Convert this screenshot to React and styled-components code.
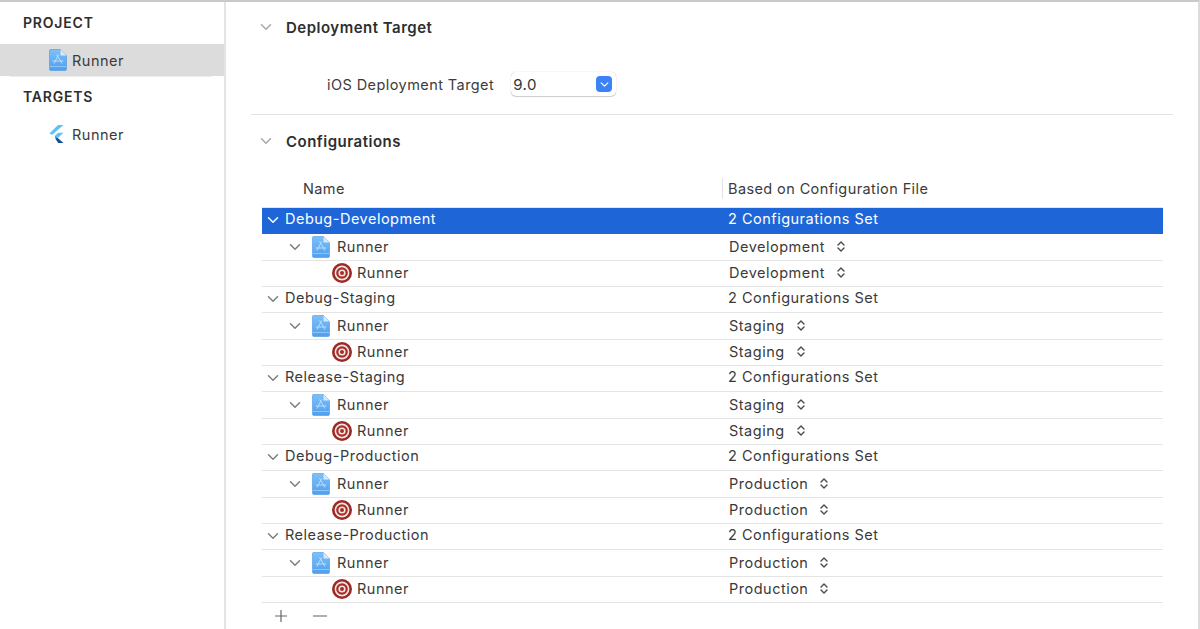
import React from "react";
import styled, { createGlobalStyle } from "styled-components";

const GlobalStyle = createGlobalStyle`
  html, body {
    margin: 0;
    padding: 0;
    background: #fff;
  }
  body {
    font-family: "Inter", "Liberation Sans", sans-serif;
    color: #2b2b2b;
    overflow: hidden;
  }
`;

const Page = styled.div`
  display: flex;
  width: 1200px;
  height: 629px;
  box-sizing: border-box;
  border-top: 2px solid #c9c9c9;
  border-right: 2px solid #dcdcdc;
  overflow: hidden;
`;

const Sidebar = styled.aside`
  width: 226px;
  flex: none;
  box-sizing: border-box;
  border-right: 2px solid #e4e4e4;
  padding-top: 12px;
`;

const SideHeading = styled.div`
  height: 18px;
  line-height: 18px;
  margin-top: ${(p) => p.$top || 0}px;
  padding-left: 23px;
  font-size: 14px;
  font-weight: 600;
  letter-spacing: 0.8px;
  color: #2e2e2e;
`;

const SideItem = styled.div`
  position: relative;
  display: flex;
  align-items: center;
  gap: ${(p) => p.$gap}px;
  height: 32px;
  margin-top: ${(p) => p.$top}px;
  padding-left: 49px;
  font-size: 14.5px;
  letter-spacing: 0.5px;
  color: #3a3a3a;
  background: ${(p) => (p.$selected ? "#dcdcdc" : "transparent")};

  &::after {
    content: "";
    display: ${(p) => (p.$selected ? "block" : "none")};
    position: absolute;
    left: 10px;
    right: 12px;
    bottom: -1px;
    height: 1px;
    background: #ececec;
  }
`;

const Main = styled.main`
  flex: 1;
  min-width: 0;
  padding: 0 25px 0 25px;
`;

const SectionHead = styled.div`
  display: flex;
  align-items: center;
  gap: 14px;
  height: 20px;
  padding-left: 9px;
  margin-top: ${(p) => p.$top}px;
  font-size: 15px;
  font-weight: 600;
  letter-spacing: 0.5px;
  color: #2e2e2e;
`;

const TargetRow = styled.div`
  display: flex;
  align-items: center;
  height: 24px;
  margin-top: 35px;
  padding-left: 76px;
  font-size: 14.5px;
  letter-spacing: 0.43px;
  color: #3c3c3c;
`;

const PopUp = styled.div`
  display: flex;
  align-items: center;
  justify-content: space-between;
  box-sizing: border-box;
  width: 105px;
  height: 24px;
  margin-left: 17px;
  padding: 0 4px 0 2px;
  border-radius: 5px;
  background: #fff;
  box-shadow: 0 0 1px rgba(0, 0, 0, 0.3), 0 1px 1px rgba(0, 0, 0, 0.18);
  font-size: 15px;
  color: #333;
`;

const PopUpArrow = styled.span`
  display: flex;
  align-items: center;
  justify-content: center;
  width: 16px;
  height: 16px;
  border-radius: 4px;
  background: #3b82f6;
`;

const Divider = styled.div`
  height: 1px;
  margin-top: 18px;
  background: #e3e3e3;
`;

const Table = styled.div`
  margin: 27px 10px 0 11px;
`;

const HeaderRow = styled.div`
  display: grid;
  grid-template-columns: 460px 1fr;
  height: 21px;
  align-items: center;
  font-size: 14.5px;
  letter-spacing: 0.4px;
  color: #3a3a3a;
`;

const NameHead = styled.div`
  padding-left: 41px;
`;

const FileHead = styled.div`
  height: 21px;
  line-height: 21px;
  padding-left: 5px;
  border-left: 1px solid #e2e2e2;
`;

const Rows = styled.div`
  margin-top: 8px;
  border-top: 1px solid #e4e4e4;
`;

const Row = styled.div`
  display: grid;
  grid-template-columns: 466px 1fr;
  align-items: center;
  box-sizing: border-box;
  height: 26.33px;
  padding-bottom: ${(p) => p.$lift || 0}px;
  border-bottom: 1px solid ${(p) => (p.$selected ? "#1e66d8" : "#e4e4e4")};
  background: ${(p) => (p.$selected ? "#1e66d8" : "transparent")};
  color: ${(p) => (p.$selected ? "#fff" : "#3a3a3a")};
  font-size: 14.5px;
  letter-spacing: 0.5px;
`;

const NameCell = styled.div`
  display: flex;
  align-items: center;
  padding-left: ${(p) => p.$indent}px;
  gap: ${(p) => p.$gap}px;
  white-space: nowrap;
`;

const ValueCell = styled.div`
  display: flex;
  align-items: center;
  gap: 11px;
  padding-left: ${(p) => p.$pad}px;
  white-space: nowrap;
`;

const GroupChevron = styled.span`
  display: flex;
  margin-top: 4px;
`;

const Footer = styled.div`
  display: flex;
  align-items: center;
  gap: 25px;
  height: 26px;
  padding-left: 12px;
`;

const Chevron = ({ color = "#8c8c8c", size = 12 }) => (
  <svg width={size} height={size} viewBox="0 0 12 12" fill="none">
    <path d="M1.5 3.8 6 8.2l4.5-4.4" stroke={color} strokeWidth="1.5" strokeLinecap="round" strokeLinejoin="round" />
  </svg>
);

const AppIcon = ({ id }) => (
  <svg width="18" height="22" viewBox="0 0 18 22">
    <defs>
      <linearGradient id={id} x1="0" y1="0" x2="0" y2="1">
        <stop offset="0" stopColor="#7cc0f7" />
        <stop offset="1" stopColor="#4f9fef" />
      </linearGradient>
    </defs>
    <path d="M1.5 0.5H11.5L17.5 6.5V20a1.5 1.5 0 0 1-1.5 1.5H2A1.5 1.5 0 0 1 .5 20V1.5a1 1 0 0 1 1-1Z" fill={`url(#${id})`} stroke="#4a97e4" strokeWidth="0.6" />
    <path d="M11.5 .5V6.5H17.5Z" fill="#d5e9fb" />
    <path d="M.5 17.5h17" stroke="#8cc4f6" strokeWidth="1" />
    <path d="M9.6 5.5 5 14.5M7.6 5.5l5.4 9M3.6 12h10.8" stroke="#c4e0fa" strokeWidth="0.9" fill="none" />
  </svg>
);

const TargetIcon = () => (
  <svg width="20" height="20" viewBox="0 0 20 20">
    <circle cx="10" cy="10" r="10" fill="#9c2a24" />
    <circle cx="10" cy="10" r="7.4" fill="#f0e6e4" />
    <circle cx="10" cy="10" r="5.8" fill="#a92d27" />
    <circle cx="10" cy="10" r="3.6" fill="#f0e6e4" />
    <circle cx="10" cy="10" r="2" fill="#a92d27" />
  </svg>
);

const FlutterIcon = () => (
  <svg width="15" height="18" viewBox="0 0 15 18">
    <path d="M9 0h5.5L3.3 9.8.4 8.6Z" fill="#5cc3f5" />
    <path d="M9.2 7.8h5.3L8.8 13l-2.7-2.5Z" fill="#5cc3f5" />
    <path d="M6.1 10.5 8.8 13l-2.7 0Z" fill="#2f8fd6" />
    <path d="M6.1 13.2 8.8 13l5.7 5H9.2Z" fill="#0f4f92" />
  </svg>
);

const Stepper = () => (
  <svg width="10" height="13" viewBox="0 0 10 13" fill="none">
    <path d="M2 5 5 2l3 3M2 8l3 3 3-3" stroke="#4a4a4a" strokeWidth="1.4" strokeLinecap="round" strokeLinejoin="round" />
  </svg>
);

const PlusIcon = () => (
  <svg width="14" height="14" viewBox="0 0 14 14" fill="none">
    <path d="M7 1v12M1 7h12" stroke="#666" strokeWidth="1.2" />
  </svg>
);

const MinusIcon = () => (
  <svg width="14" height="14" viewBox="0 0 14 14" fill="none">
    <path d="M0 7h14" stroke="#777" strokeWidth="1.2" />
  </svg>
);

const configs = [
  { name: "Debug-Development", file: "Development", selected: true },
  { name: "Debug-Staging", file: "Staging" },
  { name: "Release-Staging", file: "Staging" },
  { name: "Debug-Production", file: "Production" },
  { name: "Release-Production", file: "Production" },
];

const ConfigGroup = ({ name, file, selected }) => (
  <>
    <Row $selected={selected} $lift={5}>
      <NameCell $indent={5} $gap={6}>
        <GroupChevron>
          <Chevron color={selected ? "#fff" : "#7d7d7d"} />
        </GroupChevron>
        {name}
      </NameCell>
      <ValueCell $pad={0}>2 Configurations Set</ValueCell>
    </Row>
    <Row>
      <NameCell $indent={27} $gap={11}>
        <Chevron color="#7d7d7d" />
        <NameCell $indent={0} $gap={7}>
          <AppIcon id={`app-${name}`} />
          Runner
        </NameCell>
      </NameCell>
      <ValueCell $pad={1}>
        {file}
        <Stepper />
      </ValueCell>
    </Row>
    <Row $lift={1}>
      <NameCell $indent={70} $gap={5}>
        <TargetIcon />
        Runner
      </NameCell>
      <ValueCell $pad={1}>
        {file}
        <Stepper />
      </ValueCell>
    </Row>
  </>
);

export default function App() {
  return (
    <>
      <GlobalStyle />
      <Page>
        <Sidebar>
          <SideHeading>PROJECT</SideHeading>
          <SideItem $selected $top={12} $gap={5}>
            <AppIcon id="app-side" />
            Runner
          </SideItem>
          <SideHeading $top={12}>TARGETS</SideHeading>
          <SideItem $top={12} $gap={8}>
            <FlutterIcon />
            Runner
          </SideItem>
        </Sidebar>
        <Main>
          <SectionHead $top={15}>
            <Chevron color="#a8a8a8" />
            Deployment Target
          </SectionHead>
          <TargetRow>
            iOS Deployment Target
            <PopUp>
              9.0
              <PopUpArrow>
                <Chevron color="#fff" size={9} />
              </PopUpArrow>
            </PopUp>
          </TargetRow>
          <Divider />
          <SectionHead $top={16}>
            <Chevron color="#a8a8a8" />
            Configurations
          </SectionHead>
          <Table>
            <HeaderRow>
              <NameHead>Name</NameHead>
              <FileHead>Based on Configuration File</FileHead>
            </HeaderRow>
            <Rows>
              {configs.map((c) => (
                <ConfigGroup key={c.name} {...c} />
              ))}
            </Rows>
            <Footer>
              <PlusIcon />
              <MinusIcon />
            </Footer>
          </Table>
        </Main>
      </Page>
    </>
  );
}
